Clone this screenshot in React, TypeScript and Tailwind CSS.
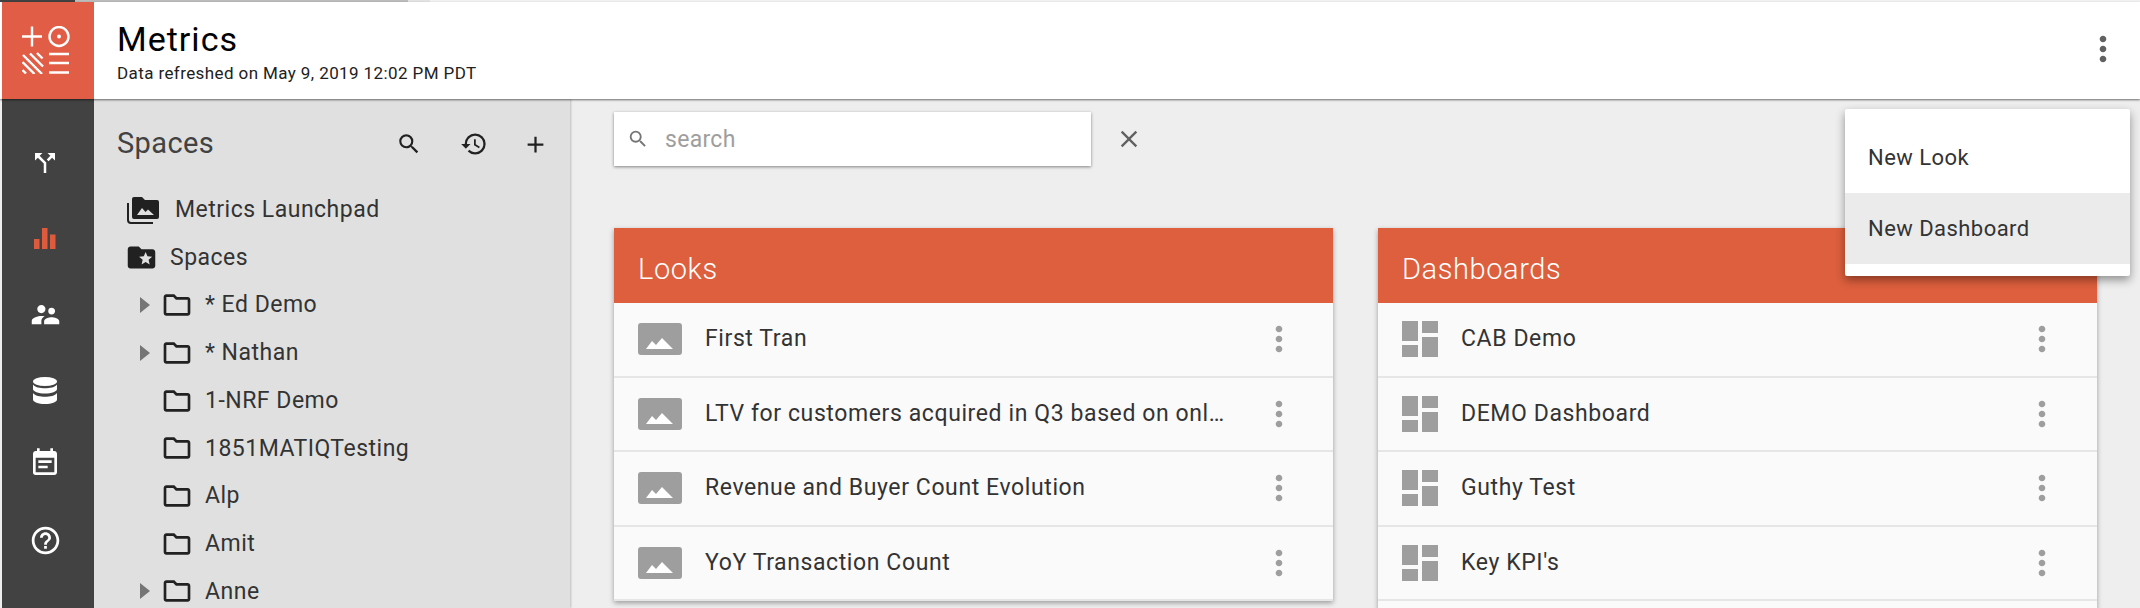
import React from "react";
import {
  MdAdd,
  MdCallSplit,
  MdClose,
  MdDashboard,
  MdEventNote,
  MdFolderSpecial,
  MdHelpOutline,
  MdHistory,
  MdMoreVert,
  MdOutlineFolder,
  MdSearch,
  MdSupervisorAccount,
} from "react-icons/md";

const looks = [
  "First Tran",
  "LTV for customers acquired in Q3 based on onl…",
  "Revenue and Buyer Count Evolution",
  "YoY Transaction Count",
];
const dashboards = ["CAB Demo", "DEMO Dashboard", "Guthy Test", "Key KPI's"];
const folders = [
  { name: "* Ed Demo", arrow: true },
  { name: "* Nathan", arrow: true },
  { name: "1-NRF Demo", arrow: false },
  { name: "1851MATIQTesting", arrow: false },
  { name: "Alp", arrow: false },
  { name: "Amit", arrow: false },
  { name: "Anne", arrow: true },
];

function Logo() {
  return (
    <svg width="48" height="48" viewBox="0 0 48 48" fill="none" stroke="#fff" strokeWidth="2.4">
      <path d="M0 10.5h20M10 0.5v20" />
      <circle cx="37" cy="10.5" r="9.5" />
      <circle cx="37" cy="10.5" r="2" fill="#fff" stroke="none" />
      <path d="M1 29l19 19M0.5 36l12 12M8 27.5l13 13M15 27l5.500 5.500M0.500 44l3.500 3.500" />
      <path d="M27 28h20M27 37h20M27 46.500h20" />
    </svg>
  );
}

function ImageIcon() {
  return (
    <svg width="44" height="32" viewBox="0 0 44 32" className="shrink-0">
      <rect width="44" height="32" rx="3" fill="#9e9e9e" />
      <path d="M8 26l6-8 4 4 6-7 11 11z" fill="#fff" />
    </svg>
  );
}

function LaunchpadIcon() {
  return (
    <svg width="33" height="28" viewBox="0 0 33 28" className="shrink-0">
      <path d="M1 7v17a3 3 0 0 0 3 3h22" fill="none" stroke="#212121" strokeWidth="2" />
      <path d="M5 3a2 2 0 0 1 2-2h8l3 3h12a2 2 0 0 1 2 2v15a2 2 0 0 1-2 2H7a2 2 0 0 1-2-2z" fill="#212121" />
      <path d="M10 19l5-7 3.500 4 2.500-2.500 6 5.500z" fill="#e0e0e0" />
    </svg>
  );
}

function DatabaseIcon() {
  return (
    <svg width="24" height="27" viewBox="0 0 24 27" fill="#fff">
      <ellipse cx="12" cy="4.500" rx="12" ry="4.500" />
      <path d="M0 7.500c2 2.800 7 3.800 12 3.800s10-1 12-3.800v4.500c0 2.500-5.400 4.500-12 4.500S0 14.500 0 12z" />
      <path d="M0 16c2 2.800 7 3.800 12 3.800s10-1 12-3.800v6.500c0 2.500-5.400 4.500-12 4.500S0 25 0 22.500z" />
    </svg>
  );
}

function BarsIcon() {
  return (
    <svg width="22" height="21" viewBox="0 0 22 21" fill="#dd5a3c">
      <rect x="0" y="11" width="5.500" height="10" />
      <rect x="8" y="0" width="5.500" height="21" />
      <rect x="16" y="6.500" width="5.500" height="14.500" />
    </svg>
  );
}

function Row({ label, dashboard }: { label: string; dashboard?: boolean }) {
  return (
    <div className={dashboard ? "flex h-[74.5px] items-center border-b-2 border-[#e6e6e6] bg-[#fafafa] pl-6 pr-[35px]" : "flex h-[74.5px] items-center border-b-2 border-[#e6e6e6] bg-[#fafafa] pl-6 pr-[34px]"}>
      {dashboard ? (
        <div className="flex w-[36px] shrink-0">
          <MdDashboard className="-m-[6px] h-[48px] w-[48px] shrink-0 text-[#9e9e9e]" />
        </div>
      ) : (
        <ImageIcon />
      )}
      <span className="ml-[23px] whitespace-nowrap text-[23px] tracking-[0.6px] text-[#333]">{label}</span>
      <MdMoreVert className="ml-auto h-[40px] w-[40px] text-[#9e9e9e]" />
    </div>
  );
}

function Card({ title, items, dashboard, extra }: { title: string; items: string[]; dashboard?: boolean; extra?: boolean }) {
  return (
    <section className="flex-1 self-start bg-[#fafafa] shadow-[0_2px_5px_rgba(0,0,0,0.35)]">
      <h2 className="flex h-[75px] items-center bg-[#dd5f3d] pl-6 pt-[9px] text-[29px] font-light tracking-[0.6px] text-white">{title}</h2>
      {items.map((item) => (
        <Row key={item} label={item} dashboard={dashboard} />
      ))}
      {extra && <div className="h-[74px]" />}
    </section>
  );
}

export default function App() {
  return (
    <div className="relative flex h-[608px] w-[2140px] flex-col overflow-hidden bg-[#eeeeee] font-['Roboto',sans-serif]">
      <div className="flex h-[2px] shrink-0 bg-[#f2f2f2]">
        <div className="w-[75px] bg-[#424242]" />
        <div className="w-[333px] bg-[#bdbdbd]" />
        <div className="w-[22px] bg-[#e4e4e4]" />
      </div>

      <header className="relative z-20 flex h-[97px] shrink-0 bg-white pl-[2px] shadow-[0_1px_2px_rgba(0,0,0,0.55)]">
        <div className="flex w-[92px] shrink-0 items-center justify-center bg-[#e25d45] pb-[2px] pr-[5px]">
          <Logo />
        </div>
        <div className="ml-[23px] flex flex-col pt-[15px]">
          <h1 className="text-[34px] leading-[44px] tracking-[1px] text-black">Metrics</h1>
          <p className="mt-[2px] text-[17px] leading-[20px] tracking-[0.4px] text-[#212121]">Data refreshed on May 9, 2019 12:02 PM PDT</p>
        </div>
        <MdMoreVert className="absolute right-[17px] top-[27px] h-[40px] w-[40px] text-[#616161]" />
      </header>

      <div className="flex min-h-0 flex-1 pl-[2px]">
        <nav className="flex w-[92px] shrink-0 flex-col items-center bg-[#424242] pr-[6px] pt-[49px] text-white">
          <MdCallSplit className="h-[30px] w-[30px]" />
          <div className="mt-[50px]">
            <BarsIcon />
          </div>
          <MdSupervisorAccount className="mt-[49px] h-[33px] w-[33px]" />
          <div className="mt-[46px]">
            <DatabaseIcon />
          </div>
          <MdEventNote className="mt-[43px] h-[32px] w-[32px]" />
          <MdHelpOutline className="mt-[45px] h-[33px] w-[33px]" />
        </nav>

        <aside className="z-10 w-[476px] shrink-0 bg-[#e0e0e0] shadow-[1px_0_2px_rgba(0,0,0,0.2)]">
          <div className="flex h-[87px] items-center pl-[23px] pr-[21px] pt-[3px] text-[#212121]">
            <h2 className="text-[29px] tracking-[0.4px] text-[#424242]">Spaces</h2>
            <MdSearch className="ml-auto h-[26px] w-[26px]" />
            <MdHistory className="ml-[38px] h-[28px] w-[28px]" />
            <MdAdd className="ml-[34px] h-[27px] w-[27px]" />
          </div>
          <div className="flex h-[47.7px] items-center pl-[33px]">
            <LaunchpadIcon />
            <span className="ml-[15px] text-[23px] tracking-[0.5px] text-[#333]">Metrics Launchpad</span>
          </div>
          <div className="flex h-[47.7px] items-center pl-[34px]">
            <MdFolderSpecial className="-mx-[3px] h-[33px] w-[33px] text-[#212121]" />
            <span className="ml-[15px] pt-[1px] text-[23px] tracking-[0.5px] text-[#333]">Spaces</span>
          </div>
          {folders.map((folder) => (
            <div key={folder.name} className="flex h-[47.7px] items-center pl-[46px]">
              <div className="w-[24px] shrink-0">
                {folder.arrow && <div className="h-0 w-0 border-y-[8.500px] border-l-[10px] border-y-transparent border-l-[#757575]" />}
              </div>
              <MdOutlineFolder className="-mx-[3px] h-[32px] w-[32px] shrink-0 text-[#212121]" />
              <span className="ml-[15px] pt-[1px] text-[23px] tracking-[0.5px] text-[#333]">{folder.name}</span>
            </div>
          ))}
        </aside>

        <main className="min-w-0 flex-1 pl-[44px] pr-[43px] pt-[13px]">
          <div className="flex items-center">
            <div className="flex h-[54px] w-[477px] items-center bg-white pl-[13px] shadow-[0_1px_3px_rgba(0,0,0,0.45)]">
              <MdSearch className="h-[22px] w-[22px] text-[#757575]" />
              <span className="ml-[16px] pt-[2px] text-[23px] tracking-[0.3px] text-[#9e9e9e]">search</span>
            </div>
            <MdClose className="ml-[24px] h-[28px] w-[28px] text-[#616161]" />
          </div>
          <div className="mt-[62px] flex gap-[45px]">
            <Card title="Looks" items={looks} />
            <Card title="Dashboards" items={dashboards} dashboard extra />
          </div>
        </main>
      </div>

      <div className="absolute left-[1845px] top-[109px] z-30 w-[285px] rounded-[2px] bg-white py-[12px] shadow-[0_4px_10px_rgba(0,0,0,0.4)]">
        <div className="flex h-[72px] items-center pl-[23px] text-[22px] tracking-[0.45px] text-[#333]">New Look</div>
        <div className="flex h-[71px] items-center bg-[#ebebeb] pb-[1px] pl-[23px] text-[22px] tracking-[0.45px] text-[#333]">New Dashboard</div>
      </div>
    </div>
  );
}
